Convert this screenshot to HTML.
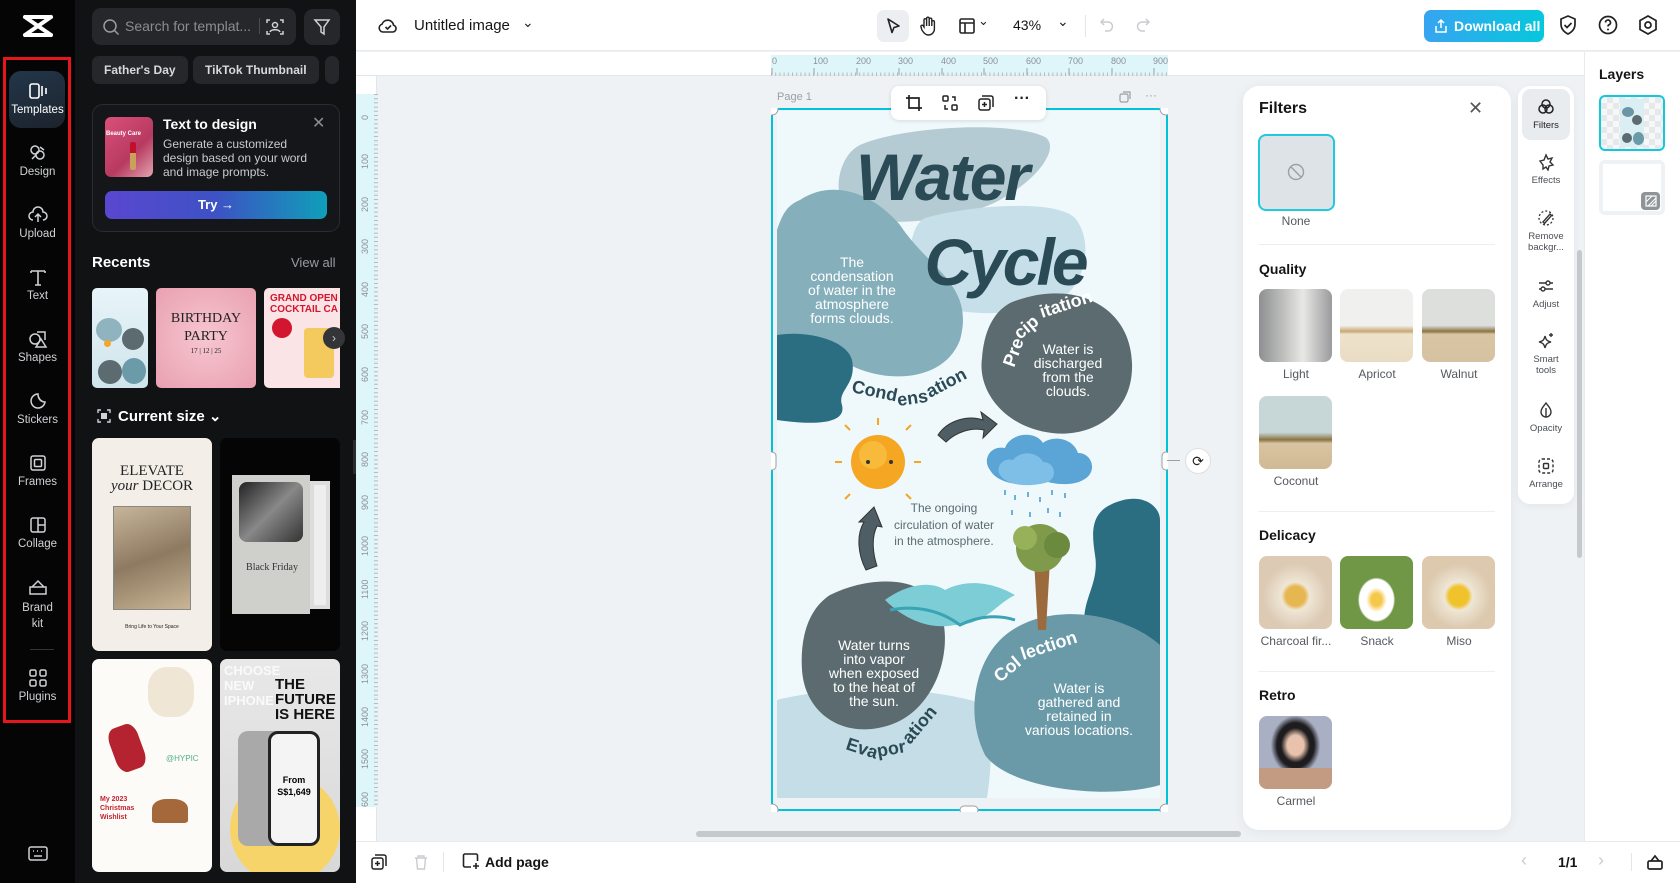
<!DOCTYPE html>
<html><head><meta charset="utf-8"><style>
*{box-sizing:border-box;margin:0;padding:0}
body{width:1680px;height:883px;overflow:hidden;position:relative;background:#eef2f5;font-family:"Liberation Sans",sans-serif}
.a{position:absolute}
.lb{left:0;top:0;width:75px;height:883px;background:#050505}
.nav{position:absolute;left:3px;width:69px;text-align:center;color:#cfd2d6;font-size:11.5px}
.nav svg{display:block;margin:0 auto 3px}
.sp{left:75px;top:0;width:281px;height:883px;background:#111214}
.chip{position:absolute;top:56px;height:28px;border-radius:7px;background:#26272b;color:#d7d9dc;font-size:12px;font-weight:bold;line-height:28px;padding:0 12px}
.tb{left:356px;top:0;width:1324px;height:51px;background:#fff;border-bottom:1px solid #e8eaed}
.ft{position:absolute;border-radius:8px}
.fl{position:absolute;width:74px;text-align:center;font-size:12px;color:#555a60}
.fh{position:absolute;left:1259px;font-size:14px;font-weight:bold;color:#151515}
.dv{position:absolute;left:1259px;width:236px;height:1px;background:#eceef0}
.tl{position:absolute;left:1518px;width:56px;text-align:center;font-size:9.5px;color:#4a4f55;line-height:11px}
.tl svg{display:block;margin:0 auto 4px}
</style></head><body>

<!-- left icon bar -->
<div class="a lb"></div>
<svg class="a" style="left:22px;top:14px" width="32" height="24" viewBox="0 0 32 24"><path d="M3 3 L29 21 M29 3 L3 21 M3 3h26 M3 21h26" stroke="#fff" stroke-width="4" fill="none" stroke-linecap="round"/></svg>
<div class="a" style="left:3px;top:57px;width:68px;height:666px;border:3px solid #e5161c"></div>
<div class="a" style="left:9px;top:71px;width:56px;height:57px;border-radius:12px;background:linear-gradient(160deg,#22364a,#1c232c)"></div>
<div class="nav" style="top:81px;color:#fff"><svg width="22" height="20" viewBox="0 0 22 20"><rect x="3" y="3" width="9" height="14" rx="2" stroke="#fff" stroke-width="1.6" fill="none"/><path d="M15 5v10M19 7v6" stroke="#fff" stroke-width="1.6"/></svg>Templates</div>
<div class="nav" style="top:143px"><svg width="22" height="20" viewBox="0 0 22 20"><circle cx="8" cy="7" r="4" stroke="#cfd2d6" stroke-width="1.5" fill="none"/><circle cx="13" cy="12" r="4" stroke="#cfd2d6" stroke-width="1.5" fill="none"/><path d="M5 16l4-4M13 4l4 3" stroke="#cfd2d6" stroke-width="1.5"/></svg>Design</div>
<div class="nav" style="top:205px"><svg width="22" height="20" viewBox="0 0 22 20"><path d="M6 15a4 4 0 0 1 0-8 5 5 0 0 1 10 0 4 4 0 0 1 0 8M11 17v-7M8 12l3-3 3 3" stroke="#cfd2d6" stroke-width="1.5" fill="none"/></svg>Upload</div>
<div class="nav" style="top:267px"><svg width="22" height="20" viewBox="0 0 22 20"><path d="M4 4h14M11 4v14M4 4v2M18 4v2M8 18h6" stroke="#cfd2d6" stroke-width="1.6" fill="none"/></svg>Text</div>
<div class="nav" style="top:329px"><svg width="22" height="20" viewBox="0 0 22 20"><circle cx="8" cy="10" r="5" stroke="#cfd2d6" stroke-width="1.5" fill="none"/><path d="M10 3h8v8M9 18l5-8 5 8z" stroke="#cfd2d6" stroke-width="1.5" fill="none"/></svg>Shapes</div>
<div class="nav" style="top:391px"><svg width="22" height="20" viewBox="0 0 22 20"><path d="M18 11a7 7 0 1 1-7-8c0 4 3 8 7 8zM11 3c0 5 3 8 7 8" stroke="#cfd2d6" stroke-width="1.5" fill="none"/></svg>Stickers</div>
<div class="nav" style="top:453px"><svg width="22" height="20" viewBox="0 0 22 20"><rect x="4" y="3" width="14" height="14" rx="2" stroke="#cfd2d6" stroke-width="1.5" fill="none"/><rect x="7.5" y="6.5" width="7" height="7" rx="1" stroke="#cfd2d6" stroke-width="1.5" fill="none"/></svg>Frames</div>
<div class="nav" style="top:515px"><svg width="22" height="20" viewBox="0 0 22 20"><rect x="4" y="3" width="14" height="14" rx="2" stroke="#cfd2d6" stroke-width="1.5" fill="none"/><path d="M11 3v14M11 10h7" stroke="#cfd2d6" stroke-width="1.5"/></svg>Collage</div>
<div class="nav" style="top:577px;line-height:16px"><svg width="22" height="20" viewBox="0 0 22 20"><path d="M3 10h16v7H3zM5 10l6-6 6 6" stroke="#cfd2d6" stroke-width="1.5" fill="none"/></svg>Brand<br>kit</div>
<div class="a" style="left:30px;top:649px;width:24px;height:1px;background:#333"></div>
<div class="nav" style="top:668px"><svg width="22" height="20" viewBox="0 0 22 20"><rect x="3" y="2" width="6" height="6" rx="1.5" stroke="#cfd2d6" stroke-width="1.5" fill="none"/><rect x="13" y="2" width="6" height="6" rx="1.5" stroke="#cfd2d6" stroke-width="1.5" fill="none"/><rect x="3" y="12" width="6" height="6" rx="1.5" stroke="#cfd2d6" stroke-width="1.5" fill="none"/><rect x="13" y="12" width="6" height="6" rx="1.5" stroke="#cfd2d6" stroke-width="1.5" fill="none"/></svg>Plugins</div>
<svg class="a" style="left:27px;top:845px" width="22" height="18" viewBox="0 0 22 18"><rect x="2" y="2" width="18" height="13" rx="2" stroke="#cfd2d6" stroke-width="1.5" fill="none"/><path d="M6 6h1M10 6h1M14 6h1M7 11h8" stroke="#cfd2d6" stroke-width="1.5"/></svg>

<!-- side panel -->
<div class="a sp"></div>
<div class="a" style="left:92px;top:8px;width:204px;height:37px;border-radius:9px;background:#26272b"></div>
<svg class="a" style="left:102px;top:18px" width="18" height="18" viewBox="0 0 18 18"><circle cx="8" cy="8" r="6" stroke="#9a9ca0" stroke-width="1.5" fill="none"/><path d="M12.5 12.5l4 4" stroke="#9a9ca0" stroke-width="1.5"/></svg>
<div class="a" style="left:125px;top:18px;color:#8b8d91;font-size:14px">Search for templat...</div>
<div class="a" style="left:259px;top:18px;width:1px;height:16px;background:#4a4b4f"></div>
<svg class="a" style="left:265px;top:17px" width="20" height="20" viewBox="0 0 20 20"><path d="M2 6V3h3M15 3h3v3M18 14v3h-3M5 17H2v-3" stroke="#cfd2d6" stroke-width="1.5" fill="none"/><circle cx="10" cy="8" r="2.5" stroke="#cfd2d6" stroke-width="1.5" fill="none"/><path d="M5 15c1-3 9-3 10 0" stroke="#cfd2d6" stroke-width="1.5" fill="none"/></svg>
<div class="a" style="left:304px;top:9px;width:36px;height:36px;border-radius:9px;background:#26272b"></div>
<svg class="a" style="left:312px;top:17px" width="20" height="20" viewBox="0 0 20 20"><path d="M3 3h14l-5 7v7l-3-2v-5z" stroke="#cfd2d6" stroke-width="1.5" fill="none"/></svg>
<div class="chip" style="left:92px">Father's Day</div>
<div class="chip" style="left:193px">TikTok Thumbnail</div>
<div class="chip" style="left:325px;width:14px;padding:0"></div>

<div class="a" style="left:92px;top:104px;width:248px;height:128px;border-radius:11px;border:1px solid #2b2c30;background:#151619"></div>
<div class="a" style="left:105px;top:117px;width:48px;height:60px;border-radius:6px;background:linear-gradient(135deg,#d9507a,#b83a60 60%,#e3a4b0)"></div>
<div class="a" style="left:106px;top:131px;color:#fff;font-size:6px;font-weight:bold">Beauty Care</div>
<div class="a" style="left:130px;top:142px;width:6px;height:28px;background:linear-gradient(#c0102a 40%,#c9a15a 40%);border-radius:2px"></div>
<div class="a" style="left:163px;top:116px;color:#fff;font-size:14px;font-weight:bold">Text to design</div>
<div class="a" style="left:312px;top:113px;color:#8b8d91;font-size:16px">✕</div>
<div class="a" style="left:163px;top:137px;color:#c8cacd;font-size:12px;line-height:14px">Generate a customized<br>design based on your word<br>and image prompts.</div>
<div class="a" style="left:105px;top:191px;width:222px;height:28px;border-radius:7px;background:linear-gradient(90deg,#5a47d0,#3d52c4 50%,#0f9fb9);color:#fff;font-size:13px;font-weight:bold;text-align:center;line-height:28px">Try →</div>

<div class="a" style="left:92px;top:254px;color:#fff;font-size:15px;font-weight:bold">Recents</div>
<div class="a" style="left:291px;top:255px;color:#9a9ca0;font-size:13px">View all</div>
<div class="a" style="left:92px;top:288px;width:56px;height:100px;border-radius:5px;background:linear-gradient(#e8f4f8,#cfe5ec);overflow:hidden"><div class="a" style="left:4px;top:30px;width:26px;height:24px;border-radius:50%;background:#8fb4c0"></div><div class="a" style="left:30px;top:40px;width:22px;height:22px;border-radius:50%;background:#5b6b70"></div><div class="a" style="left:6px;top:72px;width:24px;height:24px;border-radius:50%;background:#5b6b70"></div><div class="a" style="left:30px;top:70px;width:24px;height:26px;border-radius:50%;background:#6b9aa8"></div><div class="a" style="left:12px;top:52px;width:7px;height:7px;border-radius:50%;background:#f5a623"></div></div>
<div class="a" style="left:156px;top:288px;width:100px;height:100px;border-radius:5px;background:radial-gradient(#f7c6d0,#e9a0b1);text-align:center;font-family:'Liberation Serif',serif;color:#222;font-size:14px;line-height:18px;padding-top:22px">BIRTHDAY<br>PARTY<div style="font-size:7px;line-height:10px">17 | 12 | 25</div></div>
<div class="a" style="left:264px;top:288px;width:76px;height:100px;border-radius:5px 0 0 5px;background:#fbe4e6;overflow:hidden;color:#d3162f;font-size:10px;font-weight:bold;line-height:11px;padding:5px 0 0 6px">GRAND OPEN<br>COCKTAIL CA<div class="a" style="left:8px;top:30px;width:20px;height:20px;border-radius:50%;background:#d3162f"></div><div class="a" style="left:40px;top:40px;width:30px;height:50px;background:#f4c95d;border-radius:4px"></div></div>
<div class="a" style="left:323px;top:327px;width:22px;height:22px;border-radius:50%;background:#333539;color:#ccc;font-size:12px;text-align:center;line-height:22px">›</div>

<svg class="a" style="left:96px;top:408px" width="16" height="16" viewBox="0 0 16 16"><path d="M2 5V2h3M11 2h3v3M14 11v3h-3M5 14H2v-3" stroke="#cfd2d6" stroke-width="1.4" fill="none"/><rect x="5" y="5" width="6" height="6" fill="#cfd2d6"/></svg>
<div class="a" style="left:118px;top:407px;color:#fff;font-size:15px;font-weight:bold">Current size ⌄</div>

<div class="a" style="left:92px;top:438px;width:120px;height:213px;border-radius:7px;background:#f3eee8;text-align:center;font-family:'Liberation Serif',serif;color:#222;font-size:15px;line-height:15px;padding-top:26px">ELEVATE<br><i>your</i> DECOR<div style="margin:12px auto 0;width:78px;height:104px;background:linear-gradient(160deg,#c7b59a,#8d7a60 50%,#c9b596);border:1px solid #888"></div><div style="font-size:5px;margin-top:10px;font-family:'Liberation Sans'">Bring Life to Your Space</div></div>
<div class="a" style="left:220px;top:438px;width:120px;height:213px;border-radius:7px;background:#050505"><div class="a" style="left:12px;top:37px;width:78px;height:139px;background:#cfcfcc"></div><div class="a" style="left:19px;top:44px;width:64px;height:60px;border-radius:8px;background:linear-gradient(135deg,#222,#888 50%,#333)"></div><div class="a" style="left:90px;top:43px;width:20px;height:128px;background:#eee;border:4px solid #ddd"></div><div class="a" style="left:20px;top:124px;width:64px;font-family:'Liberation Serif',serif;font-size:10px;color:#333;text-align:center">Black Friday</div></div>
<div class="a" style="left:92px;top:659px;width:120px;height:213px;border-radius:7px;background:#fdfbf7;overflow:hidden"><div class="a" style="left:56px;top:8px;width:46px;height:50px;border-radius:40%;background:#efe6d6"></div><div class="a" style="left:20px;top:66px;width:30px;height:46px;background:#b4232f;border-radius:30%;transform:rotate(-20deg)"></div><div class="a" style="left:60px;top:140px;width:36px;height:24px;background:#a4683a;border-radius:40% 40% 10% 10%"></div><div class="a" style="left:8px;top:136px;color:#c0252f;font-size:7px;font-weight:bold;line-height:9px">My 2023<br>Christmas<br>Wishlist</div><div class="a" style="left:74px;top:95px;color:#4fae8b;font-size:8px">@HYPIC</div></div>
<div class="a" style="left:220px;top:659px;width:120px;height:213px;border-radius:7px;background:linear-gradient(#e8e8e8,#d8d8d8);overflow:hidden"><div class="a" style="left:55px;top:18px;color:#111;font-size:15px;font-weight:bold;line-height:15px">THE<br>FUTURE<br>IS HERE</div><div class="a" style="left:4px;top:4px;color:#fff;font-size:13px;font-weight:bold;line-height:15px;opacity:.8">CHOOSE<br>NEW<br>IPHONE</div><div class="a" style="left:10px;top:115px;width:110px;height:110px;border-radius:50%;background:#f7d46a"></div><div class="a" style="left:18px;top:72px;width:50px;height:115px;border-radius:10px;background:#a9a9a9"></div><div class="a" style="left:48px;top:72px;width:52px;height:115px;border-radius:10px;background:#f4f4f4;border:3px solid #222;font-size:9px;font-weight:bold;text-align:center;padding-top:40px;line-height:12px">From<br>S$1,649</div></div>
<div class="a" style="left:353px;top:440px;width:8px;height:34px;border-radius:0 6px 6px 0;background:#2a2b2f"></div>

<!-- top bar -->
<div class="a tb"></div>
<svg class="a" style="left:378px;top:16px" width="20" height="20" viewBox="0 0 20 20"><path d="M5 16a4 4 0 0 1-1-7.8 6 6 0 0 1 11.6 1A3.5 3.5 0 0 1 15 16z" stroke="#222" stroke-width="1.6" fill="none"/><path d="M7.5 11l2 2 3.5-3.5" stroke="#222" stroke-width="1.6" fill="none"/></svg>
<div class="a" style="left:414px;top:17px;font-size:15px;color:#151515">Untitled image</div>
<div class="a" style="left:522px;top:14px;font-size:14px;color:#222">⌄</div>
<div class="a" style="left:877px;top:10px;width:32px;height:32px;border-radius:7px;background:#eceef1"></div>
<svg class="a" style="left:883px;top:16px" width="20" height="20" viewBox="0 0 20 20"><path d="M5 3l11 7-5 1.5-2 5z" stroke="#222" stroke-width="1.6" fill="none" stroke-linejoin="round"/></svg>
<svg class="a" style="left:918px;top:15px" width="20" height="22" viewBox="0 0 20 22"><path d="M6 12V5a1.3 1.3 0 0 1 2.6 0v6V3.5a1.3 1.3 0 0 1 2.6 0V11V4.5a1.3 1.3 0 0 1 2.6 0V11V7a1.3 1.3 0 0 1 2.6 0v7a6 6 0 0 1-6 6c-3 0-4.5-2-6.5-5L3 12a1.3 1.3 0 0 1 2-1.5z" stroke="#222" stroke-width="1.4" fill="none"/></svg>
<svg class="a" style="left:957px;top:16px" width="20" height="20" viewBox="0 0 20 20"><rect x="3" y="3" width="14" height="14" rx="1.5" stroke="#222" stroke-width="1.6" fill="none"/><path d="M3 7h14M8 7v10" stroke="#222" stroke-width="1.6"/></svg>
<div class="a" style="left:978px;top:13px;font-size:13px;color:#222">⌄</div>
<div class="a" style="left:1013px;top:17px;font-size:14px;color:#151515">43%</div>
<div class="a" style="left:1057px;top:13px;font-size:14px;color:#222">⌄</div>
<div class="a" style="left:1085px;top:15px;width:1px;height:22px;background:#e3e5e8"></div>
<svg class="a" style="left:1098px;top:16px" width="18" height="18" viewBox="0 0 18 18"><path d="M6 3L3 6l3 3M3 6h7a4 4 0 0 1 0 9H7" stroke="#c9ccd0" stroke-width="1.5" fill="none"/></svg>
<svg class="a" style="left:1134px;top:16px" width="18" height="18" viewBox="0 0 18 18"><path d="M12 3l3 3-3 3M15 6H8a4 4 0 0 0 0 9h3" stroke="#c9ccd0" stroke-width="1.5" fill="none"/></svg>
<div class="a" style="left:1424px;top:10px;width:120px;height:32px;border-radius:7px;background:linear-gradient(90deg,#37a4f1,#06c8dc);color:#fff;font-size:14px;font-weight:bold;line-height:32px;padding-left:30px">Download all</div>
<svg class="a" style="left:1433px;top:18px" width="16" height="16" viewBox="0 0 16 16"><path d="M8 10V2M5 5l3-3 3 3M3 8v6h10V8" stroke="#fff" stroke-width="1.5" fill="none"/></svg>
<svg class="a" style="left:1557px;top:13px" width="22" height="24" viewBox="0 0 22 24"><path d="M11 3l7 3v5c0 5-3 8-7 10-4-2-7-5-7-10V6z" stroke="#222" stroke-width="1.7" fill="none"/><path d="M7.5 12l2.5 2.5 4.5-4.5" stroke="#222" stroke-width="1.7" fill="none"/></svg>
<svg class="a" style="left:1597px;top:14px" width="22" height="22" viewBox="0 0 22 22"><circle cx="11" cy="11" r="8.5" stroke="#222" stroke-width="1.7" fill="none"/><path d="M8.5 8.5a2.5 2.5 0 1 1 3.5 2.3c-.8.4-1 1-1 1.7" stroke="#222" stroke-width="1.7" fill="none"/><circle cx="11" cy="15.5" r="1" fill="#222"/></svg>
<svg class="a" style="left:1637px;top:14px" width="22" height="22" viewBox="0 0 22 22"><path d="M11 2l8 4.5v9L11 20l-8-4.5v-9z" stroke="#222" stroke-width="1.7" fill="none"/><circle cx="11" cy="11" r="3" stroke="#222" stroke-width="1.7" fill="none"/></svg>

<!-- rulers -->
<div class="a" style="left:356px;top:52px;width:1228px;height:24px;background:#fff;border-bottom:1px solid #e3e6e9"></div>
<div class="a" style="left:771px;top:55px;width:397px;height:20px;background:#def6fa"></div>
<svg class="a" style="left:771px;top:55px" width="400" height="21"><g font-family="Liberation Sans" font-size="9" fill="#8a9095"><text x="1" y="9">0</text><text x="42" y="9">100</text><text x="85" y="9">200</text><text x="127" y="9">300</text><text x="170" y="9">400</text><text x="212" y="9">500</text><text x="255" y="9">600</text><text x="297" y="9">700</text><text x="340" y="9">800</text><text x="382" y="9">900</text></g><path d="M1 20V13M43 20V13M86 20V13M128 20V13M171 20V13M213 20V13M256 20V13M298 20V13M341 20V13M383 20V13" stroke="#9aa0a5"/><path d="M0 20H396" stroke="#b5bbbf" stroke-dasharray="1 3.2" stroke-width="5"/></svg>
<div class="a" style="left:356px;top:76px;width:21px;height:765px;background:#fff;border-right:1px solid #e3e6e9"></div>
<div class="a" style="left:356px;top:94px;width:21px;height:713px;background:#def6fa"></div>
<svg class="a" style="left:356px;top:94px" width="22" height="713"><g font-family="Liberation Sans" font-size="9" fill="#8a9095">
<text transform="translate(12,26) rotate(-90)">0</text>
<text transform="translate(12,75) rotate(-90)">100</text>
<text transform="translate(12,118) rotate(-90)">200</text>
<text transform="translate(12,160) rotate(-90)">300</text>
<text transform="translate(12,203) rotate(-90)">400</text>
<text transform="translate(12,245) rotate(-90)">500</text>
<text transform="translate(12,288) rotate(-90)">600</text>
<text transform="translate(12,331) rotate(-90)">700</text>
<text transform="translate(12,373) rotate(-90)">800</text>
<text transform="translate(12,416) rotate(-90)">900</text>
<text transform="translate(12,462) rotate(-90)">1000</text>
<text transform="translate(12,505) rotate(-90)">1100</text>
<text transform="translate(12,547) rotate(-90)">1200</text>
<text transform="translate(12,590) rotate(-90)">1300</text>
<text transform="translate(12,633) rotate(-90)">1400</text>
<text transform="translate(12,675) rotate(-90)">1500</text>
<text transform="translate(12,718) rotate(-90)">1600</text></g><path d="M20 0V713" stroke="#b5bbbf" stroke-dasharray="1 3.2" stroke-width="4"/></svg>

<!-- page -->
<div class="a" style="left:777px;top:91px;font-size:11px;color:#9aa0a5">Page 1</div>
<svg class="a" style="left:1118px;top:90px" width="14" height="14" viewBox="0 0 14 14"><rect x="2" y="4" width="8" height="8" rx="1.5" stroke="#9aa0a5" stroke-width="1.2" fill="none"/><path d="M5 2h7v7" stroke="#9aa0a5" stroke-width="1.2" fill="none"/></svg>
<div class="a" style="left:1145px;top:88px;font-size:12px;color:#9aa0a5">···</div>
<svg class="a" style="left:771px;top:108px" width="397" height="704" viewBox="771 108 397 704">
<rect x="777" y="111" width="383" height="687" fill="#eff9fc"/>
<path d="M860 145c40-18 150-25 185-8 15 10-5 40-40 60-40 25-120 30-150 20-25-10-20-60 5-72z" fill="#b5cbd3"/>
<path d="M925 218c40-12 130-20 150 0 20 25 10 70-20 85-40 15-100 12-125 0-25-20-25-75-5-85z" fill="#c6dfe8"/>
<path d="M800 200c30-20 70-10 100 25 30 45 75 60 60 115-15 40-70 45-110 25-30-15-55-20-73-10V230c5-15 10-25 23-30z" fill="#86afbc"/>
<path d="M777 335c30-5 70 5 75 25 5 25-15 30-10 45 5 20-30 20-65 15z" fill="#2b6e82"/>
<path d="M1010 303c60-25 120 0 122 60 2 50-40 75-80 70-45-5-75-40-70-75 2-25 10-45 28-55z" fill="#5b6b70"/>
<path d="M1110 505c30-15 50 0 50 15v155c-30 0-70-20-75-45-5-30 15-45 10-75-3-20-5-40 15-50z" fill="#2b6e82"/>
<path d="M777 700c60-15 150-15 210 5 5 30 5 60 0 93H777z" fill="#c5dde6"/>
<path d="M830 595c40-20 95-20 110 15 15 40-5 100-50 115-45 15-85-10-88-55-2-30 5-60 28-75z" fill="#5b6b70"/>
<path d="M1000 640c40-40 120-30 160 5v140c-50 15-150 5-175-30-20-40-10-90 15-115z" fill="#6a9aa8"/>
<circle cx="878" cy="462" r="27" fill="#f5a623"/><circle cx="873" cy="455" r="14" fill="#f9c84b" opacity=".6"/>
<g stroke="#f5a623" stroke-width="2"><path d="M878 425v-7M850 430l-5-5M906 430l5-5M842 462h-7M914 462h7M850 494l-5 5M906 494l5 5"/></g>
<circle cx="868" cy="462" r="2" fill="#333"/><circle cx="891" cy="462" r="2" fill="#333"/>
<path d="M938 435c10-15 30-20 45-15l-2-8 16 12-14 14 1-8c-12-3-28 2-38 12z" fill="#4e5e64" stroke="#333" stroke-width="1"/>
<path d="M990 470c-8-10 0-25 15-22 5-15 30-18 38-5 10-8 30-5 35 10 15 0 20 20 5 27-10 6-30 5-40 0-15 8-45 5-53-10z" fill="#5aa5d6"/>
<path d="M1000 475c-5-8 3-18 13-15 8-10 25-8 30 2 12 0 15 15 5 20-15 5-40 5-48-7z" fill="#7dbfe6"/>
<g stroke="#6cb0dc" stroke-width="2"><path d="M1005 490v5M1015 495v5M1028 492v5M1040 497v5M1052 490v5M1065 493v5M1012 510v5M1030 512v5M1048 508v5M1060 512v5"/></g>
<path d="M866 570c-8-15-10-35-2-48l-5 0 15-15 8 20-5-1c-6 12-4 28 0 40z" fill="#4e5e64" stroke="#333" stroke-width="1"/>
<path d="M885 600c20-15 45-20 60-10 15-8 40-12 70 5-20 10-30 30-60 30-25 5-50-5-70-25z" fill="#7ccdd6"/>
<path d="M890 610c25-5 50 0 70 15 20-10 40-10 55-5" stroke="#3aa3b5" stroke-width="3" fill="none"/>
<path d="M1034 560l4 70h8l4-70" fill="#9b6a3d"/>
<circle cx="1040" cy="548" r="24" fill="#7e9a4a"/><circle cx="1025" cy="538" r="12" fill="#97b05a"/><circle cx="1057" cy="545" r="13" fill="#6b8a3e"/>
<g font-family="Liberation Sans" font-weight="bold" fill="#2a4a55" text-anchor="middle"><text x="942" y="200" font-size="66" font-style="italic" letter-spacing="-2">Water</text><text x="1005" y="285" font-size="66" font-style="italic" letter-spacing="-3">Cycle</text></g>
<g font-family="Liberation Sans" fill="#fff" text-anchor="middle" font-size="14"><text x="852" y="267">The</text><text x="852" y="281">condensation</text><text x="852" y="295">of water in the</text><text x="852" y="309">atmosphere</text><text x="852" y="323">forms clouds.</text>
<text x="1068" y="354">Water is</text><text x="1068" y="368">discharged</text><text x="1068" y="382">from the</text><text x="1068" y="396">clouds.</text>
<text x="874" y="650">Water turns</text><text x="874" y="664">into vapor</text><text x="874" y="678">when exposed</text><text x="874" y="692">to the heat of</text><text x="874" y="706">the sun.</text>
<text x="1079" y="693">Water is</text><text x="1079" y="707">gathered and</text><text x="1079" y="721">retained in</text><text x="1079" y="735">various locations.</text></g>
<g font-family="Liberation Sans" fill="#5b6b70" text-anchor="middle" font-size="12"><text x="944" y="512">The ongoing</text><text x="944" y="529">circulation of water</text><text x="944" y="545">in the atmosphere.</text></g>
<g font-family="Liberation Sans" font-weight="bold" font-size="18"><text fill="#2a4a55" transform="translate(851,392) rotate(12)">Cond</text><text fill="#2a4a55" transform="translate(898,406) rotate(-8)">ens</text><text fill="#2a4a55" transform="translate(930,398) rotate(-28)">ation</text>
<text fill="#fff" transform="translate(1014,368) rotate(-70)">Pre</text><text fill="#fff" transform="translate(1020,340) rotate(-40)">cip</text><text fill="#fff" transform="translate(1042,318) rotate(-18)">itation</text>
<text fill="#2a4a55" transform="translate(845,749) rotate(18)">Eva</text><text fill="#2a4a55" transform="translate(878,757) rotate(-10)">por</text><text fill="#2a4a55" transform="translate(910,745) rotate(-50)">ation</text>
<text fill="#fff" transform="translate(1000,683) rotate(-40)">Col</text><text fill="#fff" transform="translate(1023,660) rotate(-18)">lection</text></g>
<rect x="772" y="109" width="395" height="701" fill="none" stroke="#00c3da" stroke-width="2"/>
<g fill="#fff" stroke="#9aa0a5"><circle cx="772" cy="109" r="6"/><circle cx="1166" cy="109" r="6"/><circle cx="772" cy="810" r="6"/><circle cx="1166" cy="810" r="6"/><rect x="768" y="452" width="8" height="18" rx="4"/><rect x="1162" y="452" width="8" height="18" rx="4"/><rect x="960" y="806" width="18" height="8" rx="4"/></g>
</svg>
<div class="a" style="left:1167px;top:460px;width:13px;height:1px;background:#9aa0a5"></div>
<div class="a" style="left:1185px;top:448px;width:26px;height:26px;border-radius:50%;background:#fff;border:1px solid #dde0e3;font-size:14px;text-align:center;line-height:24px;color:#222">⟳</div>
<div class="a" style="left:891px;top:86px;width:155px;height:34px;border-radius:8px;background:#fff;box-shadow:0 1px 4px rgba(0,0,0,.12)"></div>
<svg class="a" style="left:905px;top:94px" width="18" height="18" viewBox="0 0 18 18"><path d="M4 1v13h13M1 4h13v13" stroke="#222" stroke-width="1.7" fill="none"/></svg>
<svg class="a" style="left:941px;top:94px" width="18" height="18" viewBox="0 0 18 18"><rect x="2" y="2" width="5" height="5" rx="1" stroke="#222" stroke-width="1.5" fill="none"/><rect x="11" y="11" width="5" height="5" rx="1" stroke="#222" stroke-width="1.5" fill="none"/><path d="M11 3h3v4M7 15H4v-4" stroke="#222" stroke-width="1.5" fill="none"/></svg>
<svg class="a" style="left:977px;top:94px" width="18" height="18" viewBox="0 0 18 18"><rect x="2" y="5" width="11" height="11" rx="2" stroke="#222" stroke-width="1.5" fill="none"/><path d="M5 2h9a2 2 0 0 1 2 2v9M7.5 8v5M5 10.5h5" stroke="#222" stroke-width="1.5" fill="none"/></svg>
<div class="a" style="left:1014px;top:90px;font-size:16px;font-weight:bold;color:#222">···</div>
<div class="a" style="left:696px;top:831px;width:545px;height:6px;border-radius:3px;background:#c5c9cc"></div>

<!-- filters panel -->
<div class="a" style="left:1243px;top:86px;width:268px;height:744px;border-radius:16px;background:#fff;box-shadow:0 2px 12px rgba(0,0,0,.06)"></div>
<div class="a" style="left:1259px;top:100px;font-size:16px;font-weight:bold;color:#151515">Filters</div>
<div class="a" style="left:1468px;top:98px;font-size:18px;color:#555">✕</div>
<div class="ft" style="left:1258px;top:134px;width:77px;height:77px;background:#dde3e6;border:2px solid #20c9dd"></div>
<svg class="a" style="left:1287px;top:163px" width="18" height="18" viewBox="0 0 18 18"><circle cx="9" cy="9" r="7.5" stroke="#9aa0a5" stroke-width="1.4" fill="none"/><path d="M4 4l10 10" stroke="#9aa0a5" stroke-width="1.4"/></svg>
<div class="fl" style="left:1259px;top:214px">None</div>
<div class="dv" style="top:244px"></div>
<div class="fh" style="top:261px">Quality</div>
<div class="ft" style="left:1259px;top:289px;width:73px;height:73px;background:linear-gradient(90deg,#8d8f91,#c9c9c7 40%,#e8e8e6 60%,#9a9b9c)"></div>
<div class="ft" style="left:1340px;top:289px;width:73px;height:73px;background:linear-gradient(#f0f1ef 50%,#c9a771 58%,#efe2cb 62%,#e9dcc5)"></div>
<div class="ft" style="left:1422px;top:289px;width:73px;height:73px;background:linear-gradient(#dcdfdc 50%,#8a7443 58%,#d9c5a3 62%,#d5c2a2)"></div>
<div class="fl" style="left:1259px;top:367px">Light</div><div class="fl" style="left:1340px;top:367px">Apricot</div><div class="fl" style="left:1422px;top:367px">Walnut</div>
<div class="ft" style="left:1259px;top:396px;width:73px;height:73px;background:linear-gradient(#c7d6d6 50%,#8a7443 60%,#d8c4a0 65%,#cfba95)"></div>
<div class="fl" style="left:1259px;top:474px">Coconut</div>
<div class="dv" style="top:511px"></div>
<div class="fh" style="top:527px">Delicacy</div>
<div class="ft" style="left:1259px;top:556px;width:73px;height:73px;background:radial-gradient(circle at 50% 55%,#e6b651 18%,#efe6d5 26%,#dccab4 60%)"></div>
<div class="ft" style="left:1340px;top:556px;width:73px;height:73px;background:radial-gradient(ellipse at 50% 60%,#f5c84a 10%,#fff 20%,#fff 33%,#6f9746 36%) ,#ececec"></div>
<div class="ft" style="left:1422px;top:556px;width:73px;height:73px;background:radial-gradient(circle at 50% 55%,#f0c32c 18%,#efe6d5 26%,#dcc9ae 60%)"></div>
<div class="fl" style="left:1259px;top:634px">Charcoal fir...</div><div class="fl" style="left:1340px;top:634px">Snack</div><div class="fl" style="left:1422px;top:634px">Miso</div>
<div class="dv" style="top:671px"></div>
<div class="fh" style="top:687px">Retro</div>
<div class="ft" style="left:1259px;top:716px;width:73px;height:73px;background:radial-gradient(ellipse at 50% 40%,#e8c2ad 16%,#1d1c1f 28%,#1d1c1f 36%,#aab0c4 48%),#b88c75;overflow:hidden"><div class="a" style="left:0;top:52px;width:73px;height:21px;background:#c39a82"></div></div>
<div class="fl" style="left:1259px;top:794px">Carmel</div>

<!-- tool strip -->
<div class="a" style="left:1518px;top:86px;width:56px;height:418px;border-radius:12px;background:#fff;box-shadow:0 2px 8px rgba(0,0,0,.05)"></div>
<div class="a" style="left:1522px;top:89px;width:48px;height:51px;border-radius:9px;background:#e9ecef"></div>
<div class="tl" style="top:98px;color:#222"><svg width="18" height="18" viewBox="0 0 18 18"><circle cx="9" cy="6" r="4" stroke="#222" stroke-width="1.5" fill="none"/><circle cx="6" cy="11" r="4" stroke="#222" stroke-width="1.5" fill="none"/><circle cx="12" cy="11" r="4" stroke="#222" stroke-width="1.5" fill="none"/></svg>Filters</div>
<div class="tl" style="top:153px"><svg width="18" height="18" viewBox="0 0 18 18"><path d="M9 2l2 4 4-1-2 4 3 3-4 1-1 4-2-3-3 2v-4L3 8l4-1z" stroke="#333" stroke-width="1.4" fill="none"/></svg>Effects</div>
<div class="tl" style="top:209px"><svg width="18" height="18" viewBox="0 0 18 18"><circle cx="9" cy="9" r="7" stroke="#333" stroke-width="1.3" stroke-dasharray="2 2" fill="none"/><path d="M6 13l7-8 1.5 1.5-7 8z" stroke="#333" stroke-width="1.4" fill="none"/></svg>Remove<br>backgr...</div>
<div class="tl" style="top:277px"><svg width="18" height="18" viewBox="0 0 18 18"><path d="M2 6h14M2 12h14" stroke="#333" stroke-width="1.4"/><circle cx="11" cy="6" r="2" fill="#fff" stroke="#333" stroke-width="1.4"/><circle cx="6" cy="12" r="2" fill="#fff" stroke="#333" stroke-width="1.4"/></svg>Adjust</div>
<div class="tl" style="top:332px"><svg width="18" height="18" viewBox="0 0 18 18"><path d="M8 4c1 4 2 5 6 6-4 1-5 2-6 6-1-4-2-5-6-6 4-1 5-2 6-6zM14 1v4M12 3h4" stroke="#333" stroke-width="1.4" fill="none"/></svg>Smart<br>tools</div>
<div class="tl" style="top:401px"><svg width="18" height="18" viewBox="0 0 18 18"><path d="M9 2c3 4 5 6 5 9a5 5 0 0 1-10 0c0-3 2-5 5-9z" stroke="#333" stroke-width="1.4" fill="none"/><path d="M9 7v9" stroke="#333" stroke-width="1.4"/></svg>Opacity</div>
<div class="tl" style="top:457px"><svg width="18" height="18" viewBox="0 0 18 18"><rect x="2" y="2" width="14" height="14" rx="3" stroke="#333" stroke-width="1.4" stroke-dasharray="3 2" fill="none"/><rect x="6.5" y="6.5" width="5" height="5" rx="1" stroke="#333" stroke-width="1.4" fill="none"/></svg>Arrange</div>
<div class="a" style="left:1577px;top:250px;width:5px;height:308px;border-radius:3px;background:#c5c9cc"></div>

<!-- layers panel -->
<div class="a" style="left:1584px;top:52px;width:96px;height:789px;background:#fff;border-left:1px solid #e8eaed"></div>
<div class="a" style="left:1599px;top:66px;font-size:14px;font-weight:bold;color:#151515">Layers</div>
<div class="a" style="left:1599px;top:95px;width:66px;height:56px;border-radius:6px;border:2px solid #14c8dc;background:repeating-conic-gradient(#e6e8ea 0 25%,#f6f7f8 0 50%) 0 0/12px 12px"></div>
<div class="a" style="left:1620px;top:99px;width:24px;height:48px;background:#dbeef4;overflow:hidden"><div class="a" style="left:2px;top:8px;width:12px;height:10px;border-radius:50%;background:#6a95a4"></div><div class="a" style="left:12px;top:16px;width:10px;height:10px;border-radius:50%;background:#5b6b70"></div><div class="a" style="left:2px;top:34px;width:10px;height:10px;border-radius:50%;background:#5b6b70"></div><div class="a" style="left:13px;top:33px;width:11px;height:13px;border-radius:50%;background:#6a9aa8"></div></div>
<div class="a" style="left:1599px;top:160px;width:66px;height:55px;border-radius:6px;background:#eef2f5;padding:4px"><div style="width:58px;height:47px;background:#fff"></div></div>
<div class="a" style="left:1641px;top:192px;width:19px;height:18px;border-radius:4px;background:#8f9499"></div>
<svg class="a" style="left:1645px;top:195px" width="12" height="12" viewBox="0 0 12 12"><rect x="1" y="1" width="10" height="10" stroke="#fff" stroke-width="1.2" fill="none"/><path d="M3 11l8-8M1 7l6-6M6 11l5-5" stroke="#fff" stroke-width="1"/></svg>

<!-- bottom bar -->
<div class="a" style="left:356px;top:841px;width:1324px;height:42px;background:#fff;border-top:1px solid #e8eaed"></div>
<svg class="a" style="left:370px;top:853px" width="18" height="18" viewBox="0 0 18 18"><rect x="2" y="5" width="11" height="11" rx="2" stroke="#222" stroke-width="1.5" fill="none"/><path d="M5 2h9a2 2 0 0 1 2 2v9M7.5 8v5M5 10.5h5" stroke="#222" stroke-width="1.5" fill="none"/></svg>
<svg class="a" style="left:412px;top:853px" width="18" height="18" viewBox="0 0 18 18"><path d="M3 5h12M6 5V3h6v2M4.5 5l1 11h7l1-11" stroke="#c9ccd0" stroke-width="1.4" fill="none"/></svg>
<div class="a" style="left:443px;top:852px;width:1px;height:20px;background:#e3e5e8"></div>
<svg class="a" style="left:462px;top:852px" width="18" height="18" viewBox="0 0 18 18"><path d="M9 15H3a1.5 1.5 0 0 1-1.5-1.5v-10A1.5 1.5 0 0 1 3 2h11a1.5 1.5 0 0 1 1.5 1.5V9M14 11v6M11 14h6" stroke="#222" stroke-width="1.6" fill="none"/></svg>
<div class="a" style="left:485px;top:854px;font-size:14px;font-weight:bold;color:#151515">Add page</div>
<div class="a" style="left:1521px;top:850px;font-size:18px;color:#c9ccd0">‹</div>
<div class="a" style="left:1558px;top:854px;font-size:14px;font-weight:bold;color:#151515">1/1</div>
<div class="a" style="left:1598px;top:850px;font-size:18px;color:#c9ccd0">›</div>
<div class="a" style="left:1631px;top:853px;width:1px;height:18px;background:#e3e5e8"></div>
<svg class="a" style="left:1646px;top:853px" width="18" height="18" viewBox="0 0 18 18"><rect x="2" y="8" width="14" height="8" rx="1.5" stroke="#222" stroke-width="1.7" fill="none"/><path d="M5 8l4-5 4 5" stroke="#222" stroke-width="1.7" fill="none"/></svg>
</body></html>
